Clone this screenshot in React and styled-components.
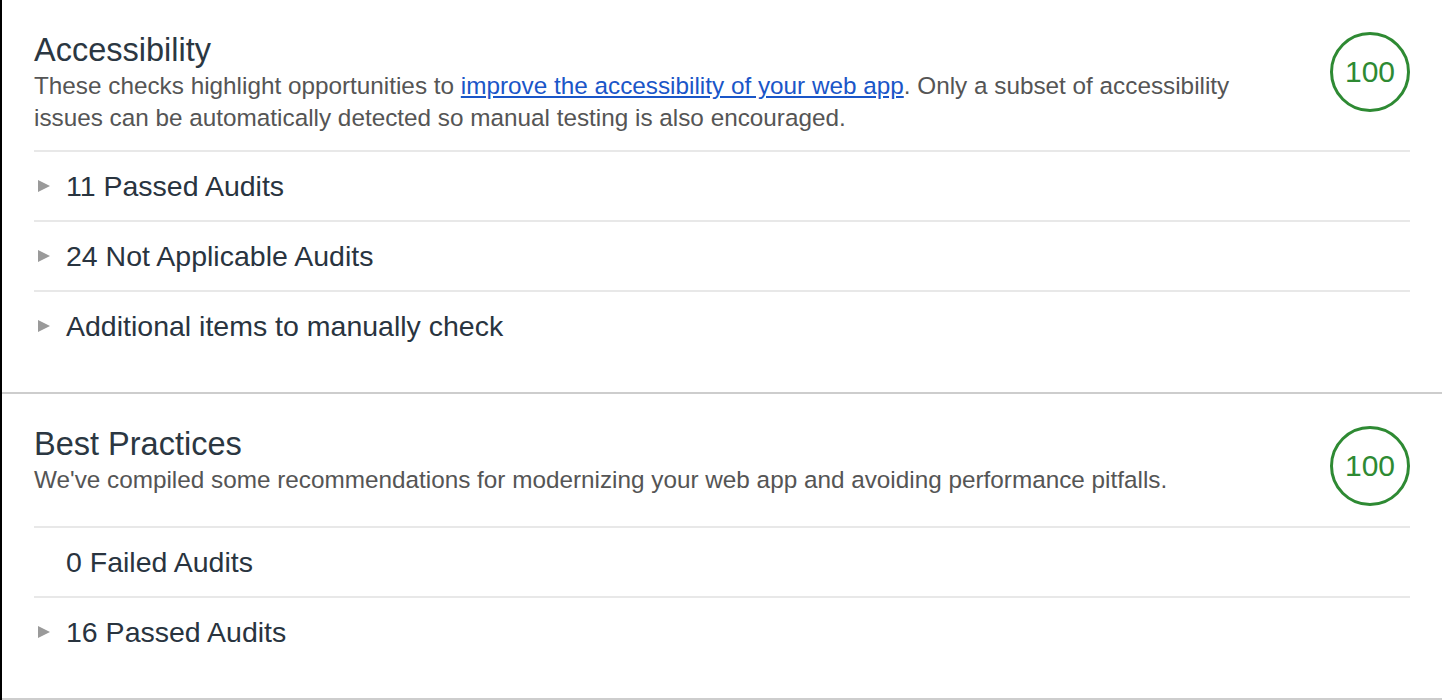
import React from 'react';
import styled, { createGlobalStyle } from 'styled-components';

const GlobalStyle = createGlobalStyle`
  html, body {
    margin: 0;
    padding: 0;
    background: #fff;
  }
  body {
    font-family: "Liberation Sans", Arial, Helvetica, sans-serif;
    -webkit-font-smoothing: antialiased;
  }
`;

const Page = styled.div`
  width: 1442px;
  border-left: 2px solid #000;
  min-height: 700px;
  box-sizing: border-box;
`;

const Section = styled.section`
  padding: 30px 32px 32px 32px;
  border-bottom: 2px solid #cdcdcd;
`;

const Header = styled.div`
  display: flex;
  justify-content: space-between;
  align-items: flex-start;
  padding-bottom: 16px;
  border-bottom: 2px solid #e8e8e8;
`;

const HeaderText = styled.div`
  width: 1210px;
`;

const Title = styled.h2`
  margin: 0;
  font-size: 32.5px;
  line-height: 40px;
  font-weight: normal;
  color: #2b3742;
`;

const Description = styled.p`
  margin: 0;
  font-size: 24.3px;
  line-height: 32px;
  color: #555;
`;

const Link = styled.a`
  color: #1a56c8;
  text-decoration: underline;
`;

const Gauge = styled.div`
  width: 80px;
  height: 80px;
  margin: 2px 0 4px;
  box-sizing: border-box;
  border: 3px solid #2e8a33;
  border-radius: 50%;
  display: flex;
  align-items: center;
  justify-content: center;
  color: #2e8a33;
  font-size: 30px;
  flex-shrink: 0;
`;

const Row = styled.div`
  display: flex;
  align-items: center;
  gap: 16px;
  height: 68px;
  padding-left: 4px;
  font-size: 28.5px;
  color: #29343f;

  & + & {
    border-top: 2px solid #e8e8e8;
  }
`;

const Arrow = styled.span`
  width: 0;
  height: 0;
  border-top: 6.5px solid transparent;
  border-bottom: 6.5px solid transparent;
  border-left: 12px solid #9a9a9a;
  visibility: ${(p) => (p.$hidden ? 'hidden' : 'visible')};
`;

const Category = ({ title, children, score, rows }) => (
  <Section>
    <Header>
      <HeaderText>
        <Title>{title}</Title>
        <Description>{children}</Description>
      </HeaderText>
      <Gauge>{score}</Gauge>
    </Header>
    {rows.map((r) => (
      <Row key={r.label}>
        <Arrow $hidden={r.noArrow} />
        {r.label}
      </Row>
    ))}
  </Section>
);

export default function App() {
  return (
    <Page>
      <GlobalStyle />
      <Category
        title="Accessibility"
        score="100"
        rows={[
          { label: '11 Passed Audits' },
          { label: '24 Not Applicable Audits' },
          { label: 'Additional items to manually check' },
        ]}
      >
        These checks highlight opportunities to{' '}
        <Link href="#">improve the accessibility of your web app</Link>. Only a subset of
        accessibility issues can be automatically detected so manual testing is also encouraged.
      </Category>
      <Category
        title="Best Practices"
        score="100"
        rows={[
          { label: '0 Failed Audits', noArrow: true },
          { label: '16 Passed Audits' },
        ]}
      >
        We've compiled some recommendations for modernizing your web app and avoiding
        performance pitfalls.
      </Category>
    </Page>
  );
}
